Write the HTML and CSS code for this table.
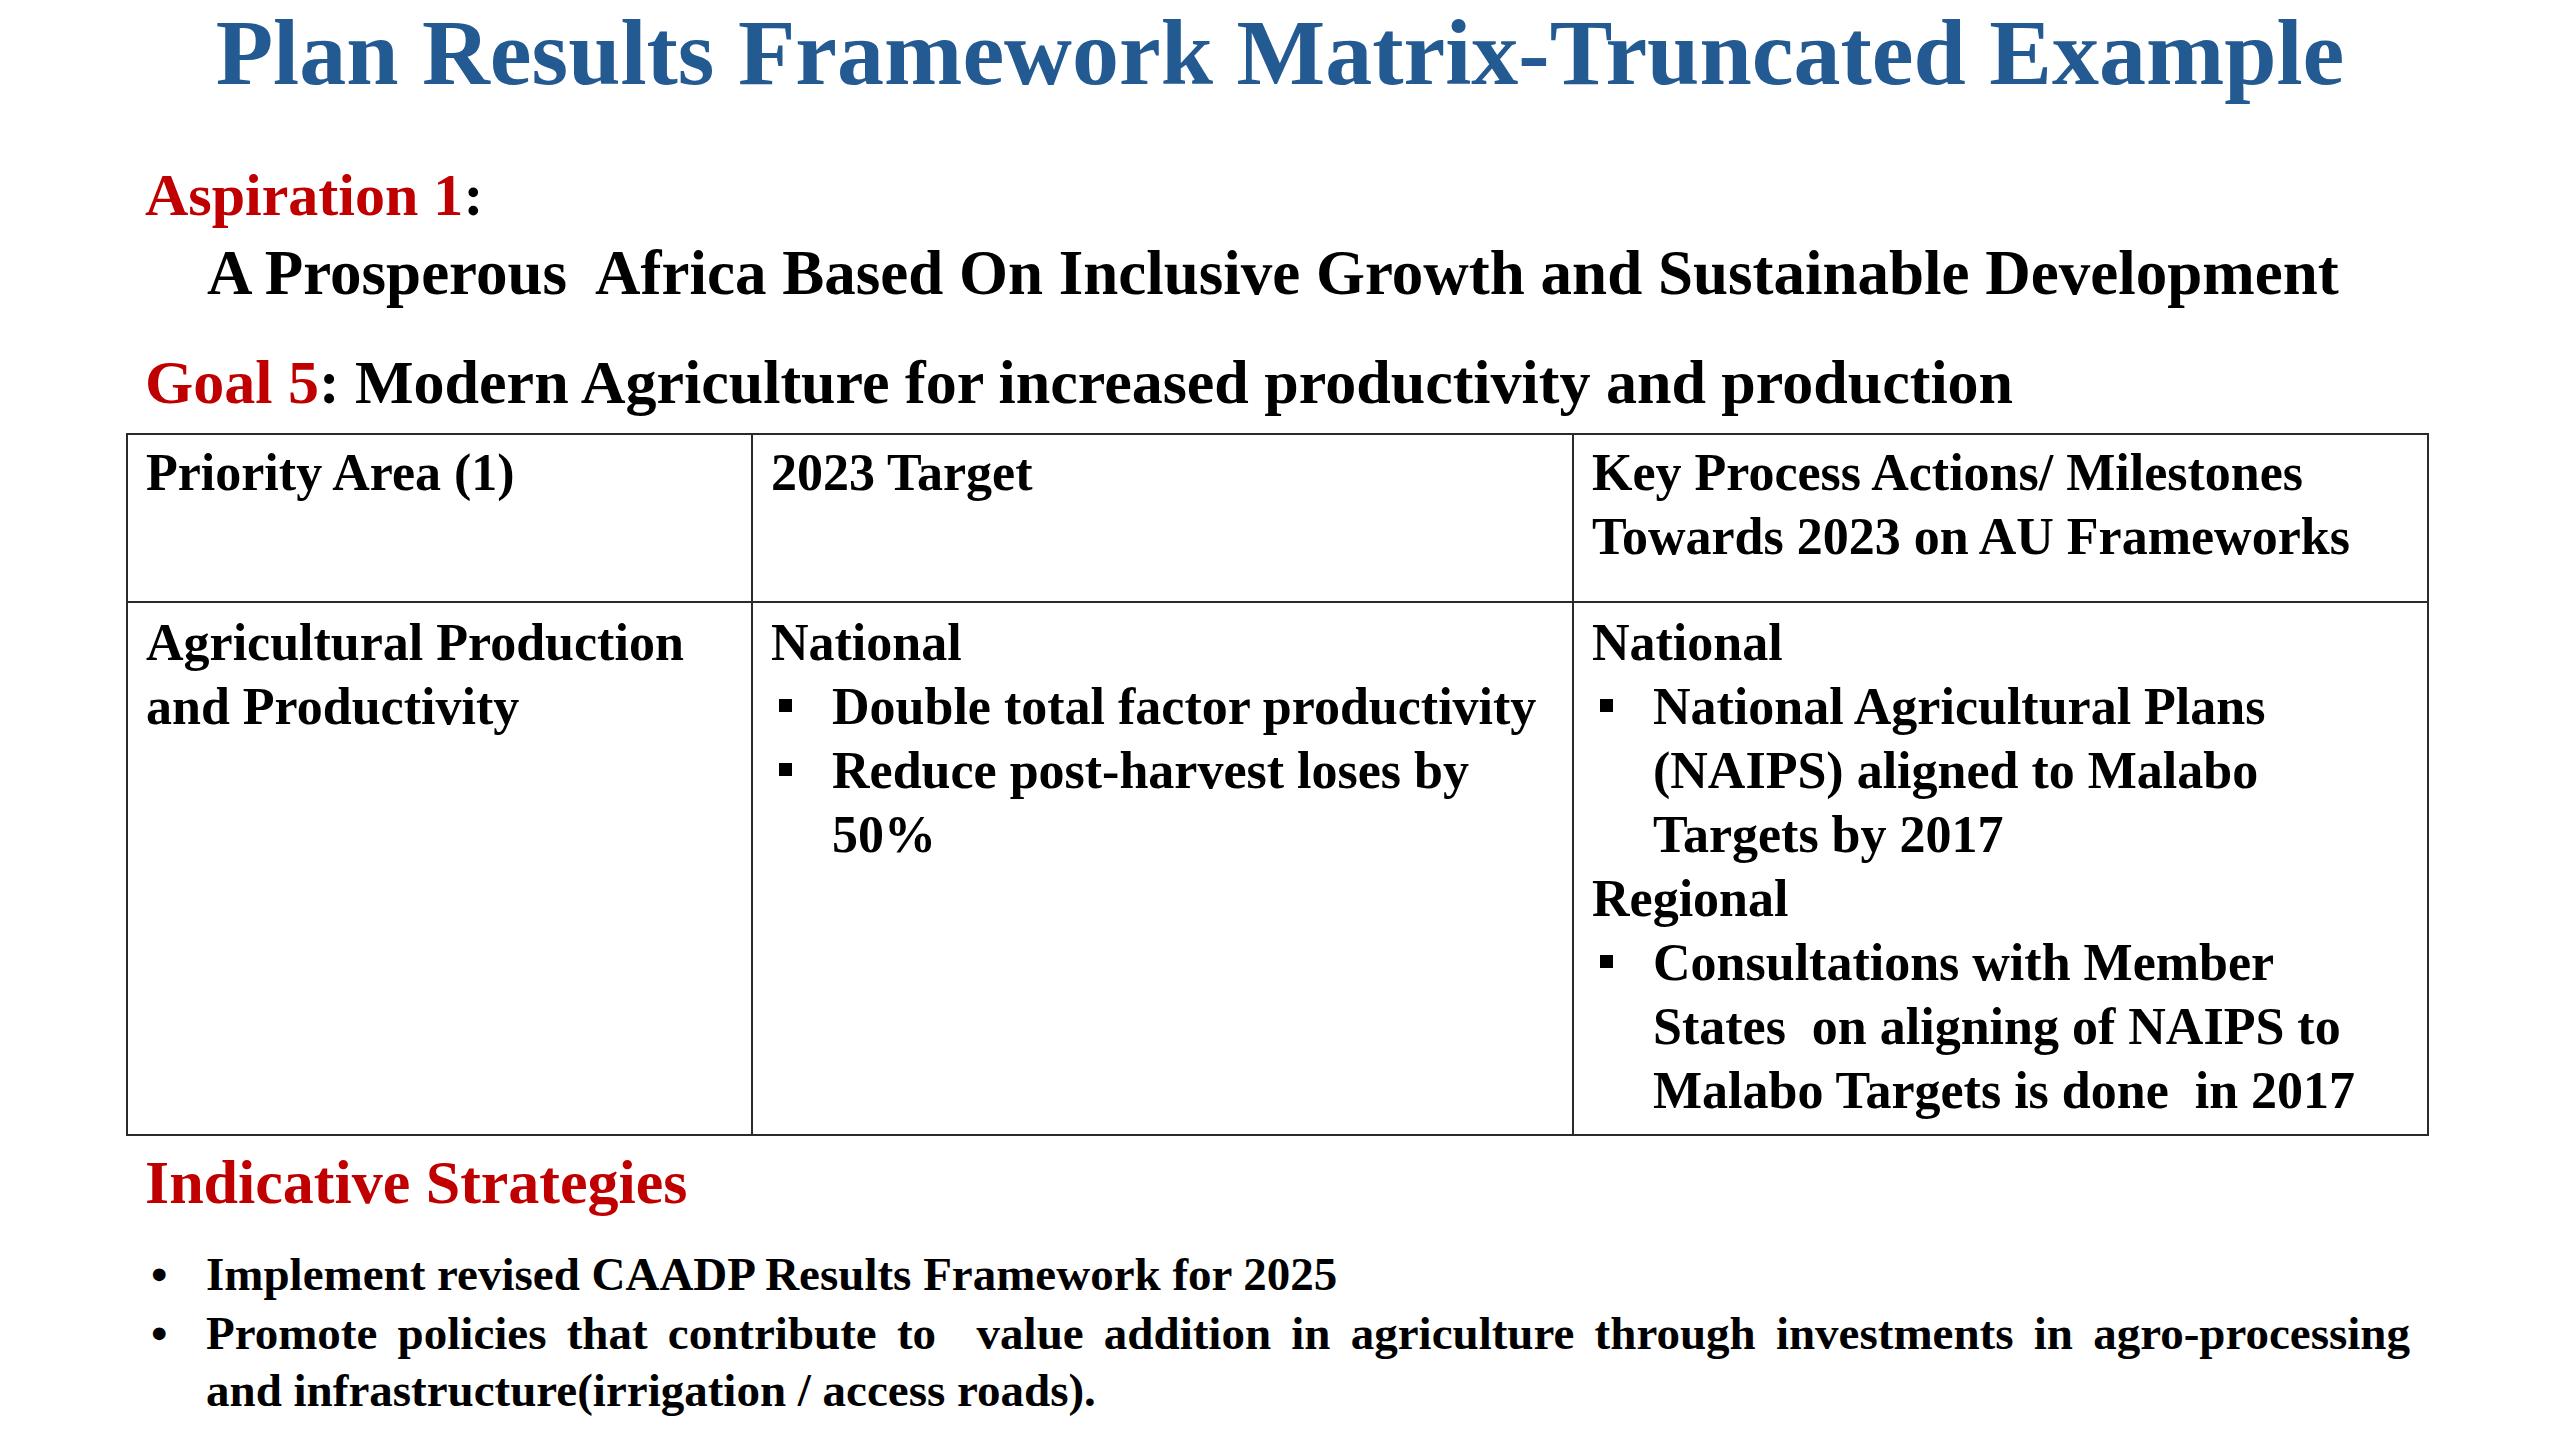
FILE: index.html
```html
<!DOCTYPE html>
<html lang="en">
<head>
<meta charset="utf-8">
<title>Plan Results Framework Matrix-Truncated Example</title>
<link rel="stylesheet" href="styles.css">
</head>
<body>
<main class="slide">
  <h1 class="title">Plan Results Framework Matrix-Truncated Example</h1>
  <p class="aspiration"><span class="red">Aspiration 1</span>:</p>
  <p class="aspiration-text">A Prosperous&nbsp; Africa Based On Inclusive Growth and Sustainable Development</p>
  <p class="goal"><span class="red">Goal 5</span>: Modern Agriculture for increased productivity and production</p>

  <div class="matrix">
    <div class="cell head">Priority Area (1)</div>
    <div class="cell head">2023 Target</div>
    <div class="cell head">Key Process Actions/ Milestones Towards 2023 on AU Frameworks</div>

    <div class="cell body">Agricultural Production and Productivity</div>
    <div class="cell body">
      <div>National</div>
      <ul class="sq">
        <li>Double total factor productivity</li>
        <li>Reduce post-harvest loses by 50%</li>
      </ul>
    </div>
    <div class="cell body">
      <div>National</div>
      <ul class="sq">
        <li>National Agricultural Plans (NAIPS) aligned to Malabo Targets by 2017</li>
      </ul>
      <div>Regional</div>
      <ul class="sq">
        <li>Consultations with Member States&nbsp; on aligning of NAIPS to Malabo Targets is done&nbsp; in 2017</li>
      </ul>
    </div>
  </div>

  <h2 class="strategies">Indicative Strategies</h2>
  <ul class="strat-list">
    <li>Implement revised CAADP Results Framework for 2025</li>
    <li><span class="jline">Promote policies that contribute to&nbsp; value addition in agriculture through investments in agro-processing</span>and infrastructure(irrigation / access roads).</li>
  </ul>
</main>
</body>
</html>
```

FILE: styles.css
```css
html, body {
  margin: 0;
  padding: 0;
  background: #ffffff;
}

body {
  font-family: "Liberation Serif", "Times New Roman", serif;
  font-weight: 700;
  color: #000000;
}

.slide {
  width: 2560px;
  height: 1440px;
  overflow: hidden;
  display: flex;
  flex-direction: column;
  align-items: flex-start;
}

.title {
  align-self: stretch;
  margin: 0;
  font-size: 94px;
  line-height: 104px;
  font-weight: 700;
  text-align: center;
  color: #245a92;
}

.red {
  color: #c00000;
}

.aspiration {
  margin: 55px 0 0 145px;
  font-size: 60px;
  line-height: 72px;
}

.aspiration-text {
  margin: 6px 0 0 207px;
  font-size: 63px;
  line-height: 72px;
  white-space: nowrap;
}

.goal {
  margin: 37px 0 0 145px;
  font-size: 62px;
  line-height: 72px;
  white-space: nowrap;
}

.matrix {
  margin: 15px 0 0 126px;
  display: grid;
  grid-template-columns: 625px 821px 855px;
  border-top: 2px solid #2a2a2a;
  border-left: 2px solid #2a2a2a;
  font-size: 52px;
  line-height: 64px;
}

.cell {
  box-sizing: border-box;
  border-right: 2px solid #2a2a2a;
  border-bottom: 2px solid #2a2a2a;
  padding: 6px 10px 0 18px;
}

.cell.head {
  height: 168px;
}

.cell.body {
  height: 533px;
  padding-top: 8px;
}

.sq {
  list-style: none;
  margin: 0;
  padding: 0;
}

.sq li {
  position: relative;
  padding-left: 61px;
}

.sq li::before {
  content: "";
  position: absolute;
  left: 8px;
  top: 24px;
  width: 13px;
  height: 13px;
  background: #000000;
}

.strategies {
  margin: 10px 0 0 145px;
  font-size: 62px;
  line-height: 72px;
  font-weight: 700;
  color: #c00000;
}

.strat-list {
  list-style: none;
  margin: 28px 0 0 145px;
  padding: 0;
  width: 2265px;
  font-size: 47px;
  line-height: 57px;
}

.strat-list li {
  position: relative;
  padding-left: 61px;
  margin-bottom: 2px;
}

.strat-list li::before {
  content: "\2022";
  position: absolute;
  left: 6px;
  top: 0;
}

.jline {
  display: block;
  text-align: justify;
  text-align-last: justify;
}
```
